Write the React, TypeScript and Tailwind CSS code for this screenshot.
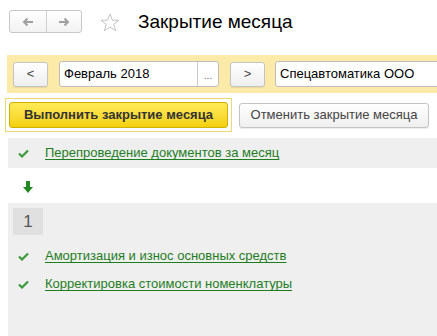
import React from "react";

const Check = () => (
  <svg width="11" height="9" viewBox="0 0 11 9" className="shrink-0">
    <path d="M1 4.5 L4 7.5 L10 1.5" stroke="#3c9a3c" strokeWidth="2.2" fill="none" />
  </svg>
);

const StepRow = ({ text }: { text: string }) => (
  <div className="flex items-center h-[28px] pl-[10px]">
    <Check />
    <a className="ml-[16px] text-[13px] text-[#1e7d1e] underline underline-offset-2 decoration-[#1e7d1e]">{text}</a>
  </div>
);

export default function App() {
  return (
    <div className="w-[437px] h-[336px] bg-white overflow-hidden font-['Liberation_Sans',Arial,sans-serif] text-[#333]">
      {/* header */}
      <div className="flex items-center pt-[10px] pl-[9px] h-[33px]">
        <div className="flex h-[23px] w-[73px] border border-[#c8c8c8] rounded-[3px] bg-gradient-to-b from-white to-[#f2f2f2]">
          <div className="w-[37px] flex items-center justify-center border-r border-[#d0d0d0]">
            <svg width="12" height="10" viewBox="0 0 12 10">
              <path d="M11 5 H3 M5.5 1.5 L2 5 L5.5 8.5" stroke="#a0a0a0" strokeWidth="2" fill="none" />
            </svg>
          </div>
          <div className="flex-1 flex items-center justify-center">
            <svg width="12" height="10" viewBox="0 0 12 10">
              <path d="M1 5 H9 M6.5 1.5 L10 5 L6.5 8.5" stroke="#a0a0a0" strokeWidth="2" fill="none" />
            </svg>
          </div>
        </div>
        <svg width="20" height="19" viewBox="0 0 20 19" className="ml-[18px] mt-[2px]">
          <path d="M10 1 L12.4 7.1 L19 7.3 L13.8 11.3 L15.6 17.7 L10 14 L4.4 17.7 L6.2 11.3 L1 7.3 L7.6 7.1 Z" fill="none" stroke="#c4c4c4" strokeWidth="1" />
        </svg>
        <div className="ml-[18px] text-[19px] text-black leading-none">Закрытие месяца</div>
      </div>

      {/* period / organization band */}
      <div className="mt-[22px] ml-[7px] h-[38px] bg-[#fbeaa8] flex items-center pl-[6px]">
        <button className="w-[35px] h-[25px] shrink-0 border border-[#c4c4c4] rounded-[3px] bg-gradient-to-b from-white to-[#eeeeee] text-[13px] text-[#444] flex items-center justify-center shadow-[0_1px_1px_rgba(0,0,0,0.08)]">&lt;</button>
        <div className="ml-[11px] w-[160px] h-[26px] border border-[#bdbdbd] rounded-[3px] bg-white flex shrink-0">
          <div className="flex-1 flex items-center pl-[4px] text-[13px] text-black">Февраль 2018</div>
          <div className="w-[21px] border-l border-[#c8c8c8] flex items-end justify-center pb-[5px] text-[10px] text-[#666] leading-none">...</div>
        </div>
        <button className="ml-[11px] w-[35px] h-[25px] border border-[#c4c4c4] rounded-[3px] bg-gradient-to-b from-white to-[#eeeeee] text-[13px] text-[#444] flex items-center justify-center shrink-0 shadow-[0_1px_1px_rgba(0,0,0,0.08)]">&gt;</button>
        <div className="ml-[10px] w-[200px] h-[26px] border border-[#bdbdbd] rounded-[3px] bg-white flex items-center pl-[4px] text-[13px] text-black shrink-0">Спецавтоматика ООО</div>
      </div>

      {/* actions */}
      <div className="mt-[5px] flex items-center">
        <div className="ml-[5px] border border-[#ead872] p-[3px]">
          <button className="w-[219px] h-[26px] rounded-[3px] border border-[#cfb000] bg-gradient-to-b from-[#ffeb55] to-[#f4d000] text-[13px] font-bold text-[#333] flex items-center justify-center">Выполнить закрытие месяца</button>
        </div>
        <button className="ml-[7px] w-[190px] h-[25px] rounded-[3px] border border-[#c4c4c4] bg-gradient-to-b from-white to-[#efefef] text-[13px] text-[#444] flex items-center justify-center shadow-[0_1px_1px_rgba(0,0,0,0.08)]">Отменить закрытие месяца</button>
      </div>

      {/* steps */}
      <div className="mt-[6px] ml-[8px]">
        <div className="bg-[#efefef] h-[30px] flex items-center">
          <StepRow text="Перепроведение документов за месяц" />
        </div>
        <div className="h-[35px] flex items-center pl-[15px] pt-[2px]">
          <svg width="10" height="12" viewBox="0 0 10 12">
            <path d="M3 0 H7 V6 H10 L5 12 L0 6 H3 Z" fill="#238a23" />
          </svg>
        </div>
        <div className="bg-[#efefef] h-[134px] pt-[5px]">
          <div className="ml-[5px] w-[30px] h-[27px] bg-[#e0e0e0] flex items-center justify-center text-[17px] text-[#555]">1</div>
          <div className="mt-[7px]">
            <StepRow text="Амортизация и износ основных средств" />
            <StepRow text="Корректировка стоимости номенклатуры" />
          </div>
        </div>
      </div>
    </div>
  );
}
